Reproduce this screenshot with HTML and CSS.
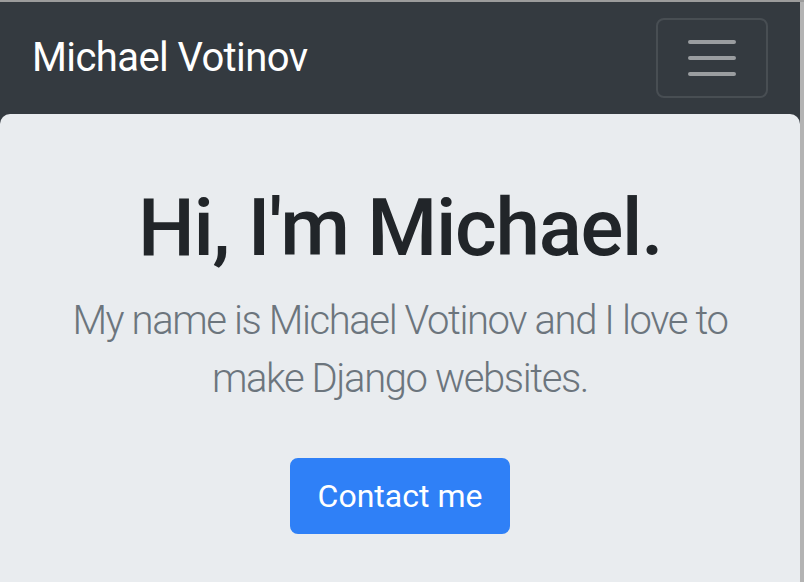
FILE: index.html
```html
<!DOCTYPE html>
<html lang="en">
<head>
<meta charset="utf-8">
<title>Michael Votinov</title>
<link rel="stylesheet" href="styles.css">
</head>
<body>
<div class="frame">
  <div class="page">
    <nav class="navbar">
      <a class="brand" href="#">Michael Votinov</a>
      <button class="toggler" type="button" aria-label="Toggle navigation">
        <svg class="toggler-icon" viewBox="0 0 30 30" width="60" height="60">
          <path d="M4 7h22M4 15h22M4 23h22" stroke="rgba(255,255,255,0.5)" stroke-width="2" stroke-linecap="round" stroke-miterlimit="10" fill="none"/>
        </svg>
      </button>
    </nav>
    <div class="main">
      <section class="jumbotron">
        <h1 class="title">Hi, I'm Michael.</h1>
        <p class="lead">My name is Michael Votinov and I love to make Django websites.</p>
        <a class="btn" href="#">Contact me</a>
      </section>
    </div>
  </div>
  <div class="scrollbar"></div>
</div>
</body>
</html>
```
FILE: styles.css
```css
html, body {
  margin: 0;
  padding: 0;
  height: 100%;
}
body {
  background: #ffffff;
  font-family: Roboto, Inter, "Noto Sans", "Liberation Sans", sans-serif;
  overflow: hidden;
}
.frame {
  display: flex;
  height: 580px;
  border-top: 2px solid #9c9c9c;
}
.page {
  width: 800px;
  display: flex;
  flex-direction: column;
}
.scrollbar {
  width: 4px;
  background: #b3b3b3;
}
.navbar {
  background: #343a40;
  height: 112px;
  padding: 16px 32px;
  box-sizing: border-box;
  display: flex;
  align-items: center;
  justify-content: space-between;
}
.brand {
  color: #ffffff;
  text-decoration: none;
  font-size: 40px;
  line-height: 60px;
  padding: 10px 0;
  font-weight: 400;
  letter-spacing: -0.6px;
  white-space: nowrap;
}
.toggler {
  width: 112px;
  height: 80px;
  padding: 8px 24px;
  box-sizing: border-box;
  background: transparent;
  border: 2px solid rgba(255, 255, 255, 0.1);
  border-radius: 8px;
  display: flex;
  align-items: center;
  justify-content: center;
}
.toggler-icon {
  display: block;
}
.main {
  flex: 1;
  background: linear-gradient(#343a40 0, #343a40 10px, #ffffff 10px);
}
.jumbotron {
  background: #e9ecef;
  border-radius: 10px 10px 0 0;
  height: 100%;
  box-sizing: border-box;
  padding: 66px 32px 0;
  text-align: center;
  display: flex;
  flex-direction: column;
  align-items: center;
}
.title {
  margin: 0 0 16px;
  font-size: 80px;
  line-height: 96px;
  font-weight: 500;
  color: #212529;
  letter-spacing: -1.3px;
  white-space: nowrap;
}
.lead {
  margin: 0 0 50px;
  font-size: 40px;
  line-height: 58px;
  font-weight: 300;
  color: #6c757d;
  letter-spacing: -1.4px;
  max-width: 690px;
}
.btn {
  display: inline-block;
  background: #2f80f7;
  color: #ffffff;
  text-decoration: none;
  font-size: 32px;
  line-height: 48px;
  padding: 12px 0;
  border: 2px solid #2f80f7;
  border-radius: 8px;
  font-weight: 400;
  width: 220px;
  box-sizing: border-box;
  white-space: nowrap;
}
```
